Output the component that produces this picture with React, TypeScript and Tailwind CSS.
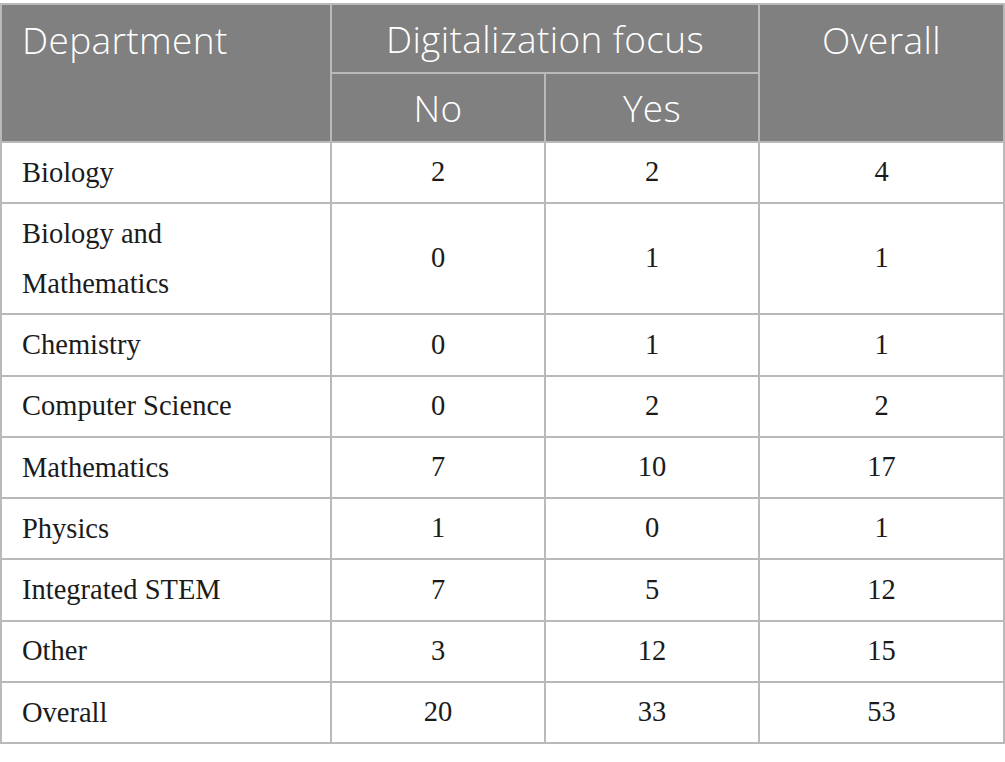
import React from "react"

const rows: [React.ReactNode, string, string, string][] = [
  ["Biology", "2", "2", "4"],
  [<>Biology and<br />Mathematics</>, "0", "1", "1"],
  ["Chemistry", "0", "1", "1"],
  ["Computer Science", "0", "2", "2"],
  ["Mathematics", "7", "10", "17"],
  ["Physics", "1", "0", "1"],
  ["Integrated STEM", "7", "5", "12"],
  ["Other", "3", "12", "15"],
  ["Overall", "20", "33", "53"],
]

export default function App() {
  return (
    <div className="w-[1005px] h-[762px] bg-white pt-[3px]">
      <table className="w-full table-fixed border-collapse">
        <colgroup>
          <col className="w-[330px]" />
          <col className="w-[214px]" />
          <col className="w-[214px]" />
          <col />
        </colgroup>
        <thead className="bg-[#7f807f] text-white font-['Open_Sans',sans-serif] text-[37px] tracking-[0.01em]">
          <tr className="h-[69px]">
            <th rowSpan={2} className="border-2 border-[#b9b9b9] text-left align-top pl-[20px] pt-[7px] font-light">
              Department
            </th>
            <th colSpan={2} className="border-2 border-[#b9b9b9] text-center font-light">
              Digitalization focus
            </th>
            <th rowSpan={2} className="border-2 border-[#b9b9b9] text-center align-top pt-[7px] font-light">
              Overall
            </th>
          </tr>
          <tr className="h-[69px]">
            <th className="border-2 border-[#b9b9b9] text-center font-light">No</th>
            <th className="border-2 border-[#b9b9b9] text-center font-light">Yes</th>
          </tr>
        </thead>
        <tbody className="font-['Liberation_Serif',serif] text-[28.5px] text-[#1b1b1b]">
          {rows.map((r, i) => (
            <tr key={i} className={i === 1 ? "h-[111px]" : "h-[61.3px]"}>
              <td className="border-2 border-[#b9b9b9] pl-[20px] leading-[50px]">{r[0]}</td>
              <td className="border-2 border-[#b9b9b9] text-center">{r[1]}</td>
              <td className="border-2 border-[#b9b9b9] text-center">{r[2]}</td>
              <td className="border-2 border-[#b9b9b9] text-center">{r[3]}</td>
            </tr>
          ))}
        </tbody>
      </table>
    </div>
  )
}
